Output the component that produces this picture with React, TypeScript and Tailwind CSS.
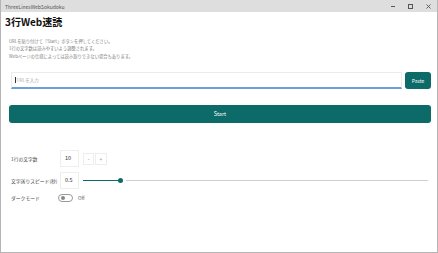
import React from "react";

const jp = { fontFamily: '"Noto Sans CJK JP", "Noto Sans", sans-serif' };

export default function App() {
  return (
    <div
      className="w-[438px] h-[253px] bg-white flex flex-col border-l border-r border-b border-[#b5b5b5] overflow-hidden relative"
      style={jp}
    >
      {/* title bar */}
      <div className="h-[12px] bg-[#dedede] flex items-center justify-between pl-[4px] pr-[6px] shrink-0">
        <span className="text-[5px] text-[#555] leading-none">ThreeLinesWebSokudoku</span>
        <div className="flex items-center gap-[13px] text-[#444]">
          <div className="w-[4px] h-[1px] bg-[#555]" />
          <div className="w-[5px] h-[5px] border border-[#555]" />
          <svg width="5" height="5" viewBox="0 0 5 5">
            <path d="M0.5 0.5 L4.5 4.5 M4.5 0.5 L0.5 4.5" stroke="#555" strokeWidth="0.9" />
          </svg>
        </div>
      </div>

      <div className="flex flex-col pl-[4px] pr-[6px]">
        <h1 className="h-[11px] text-[10px] font-bold leading-[11px] text-[#111] mt-[3.5px] whitespace-nowrap">3行Web速読</h1>

        <div className="mt-[11px] ml-[4px] text-[4.3px] leading-[7.5px] text-[#808080] whitespace-nowrap">
          <p>URLを貼り付けて「Start」ボタンを押してください。</p>
          <p>1行の文字数は読みやすいよう調整されます。</p>
          <p>Webページの仕様によっては読み取りできない場合もあります。</p>
        </div>

        <div className="flex items-center mt-[12px] ml-[6px] gap-[3px]">
          <div className="flex-1 h-[17px] border border-[#ececec] border-b-[2px] border-b-[#6b9fd9] flex items-center pl-[3px]">
            <div className="w-[0.6px] h-[6px] bg-[#333] mr-[1px]" />
            <span className="text-[4.5px] text-[#aaa]">URLを入力</span>
          </div>
          <button className="w-[26px] h-[17px] bg-[#0c6a68] rounded-[3px] text-white text-[5px] flex items-center justify-center">
            Paste
          </button>
        </div>

        <button className="mt-[16px] ml-[4px] h-[18px] bg-[#0c6a68] rounded-[3px] text-white text-[5.5px] flex items-center justify-center">
          Start
        </button>

        <div className="mt-[27px] ml-[6px] flex flex-col">
          <div className="flex items-center h-[17px]">
            <span className="w-[49px] text-[4.8px] text-[#444] whitespace-nowrap">1行の文字数</span>
            <div className="w-[19px] h-[17px] border border-[#eee] flex items-center pl-[4px] text-[5.5px] text-[#333]">10</div>
            <div className="ml-[4px] w-[11px] h-[12px] border border-[#eee] flex items-center justify-center text-[5px] text-[#666]">-</div>
            <div className="ml-[1px] w-[12px] h-[12px] border border-[#eee] flex items-center justify-center text-[5px] text-[#666]">+</div>
          </div>
          <div className="flex items-center h-[17px] mt-[5px]">
            <span className="w-[49px] text-[4.8px] text-[#444] whitespace-nowrap">文字送りスピード(秒)</span>
            <div className="w-[19px] h-[17px] border border-[#eee] flex items-center pl-[4px] text-[5.5px] text-[#333]">0.5</div>
            <div className="ml-[4px] flex-1 flex items-center mr-[3px]">
              <div className="w-[35px] h-[1.5px] bg-[#0c6a68]" />
              <div className="w-[5px] h-[5px] rounded-full bg-[#0c6a68]" />
              <div className="ml-[3px] flex-1 h-[1.5px] bg-[#cfcfcf]" />
            </div>
          </div>
          <div className="flex items-center h-[12px] mt-[3px]">
            <span className="w-[47px] text-[4.8px] text-[#444] whitespace-nowrap">ダークモード</span>
            <div className="w-[15px] h-[8px] rounded-full border border-[#999] flex items-center pl-[1.5px]">
              <div className="w-[4px] h-[4px] rounded-full bg-[#888]" />
            </div>
            <span className="ml-[5px] text-[4.8px] text-[#555]">Off</span>
          </div>
        </div>
      </div>
    </div>
  );
}
